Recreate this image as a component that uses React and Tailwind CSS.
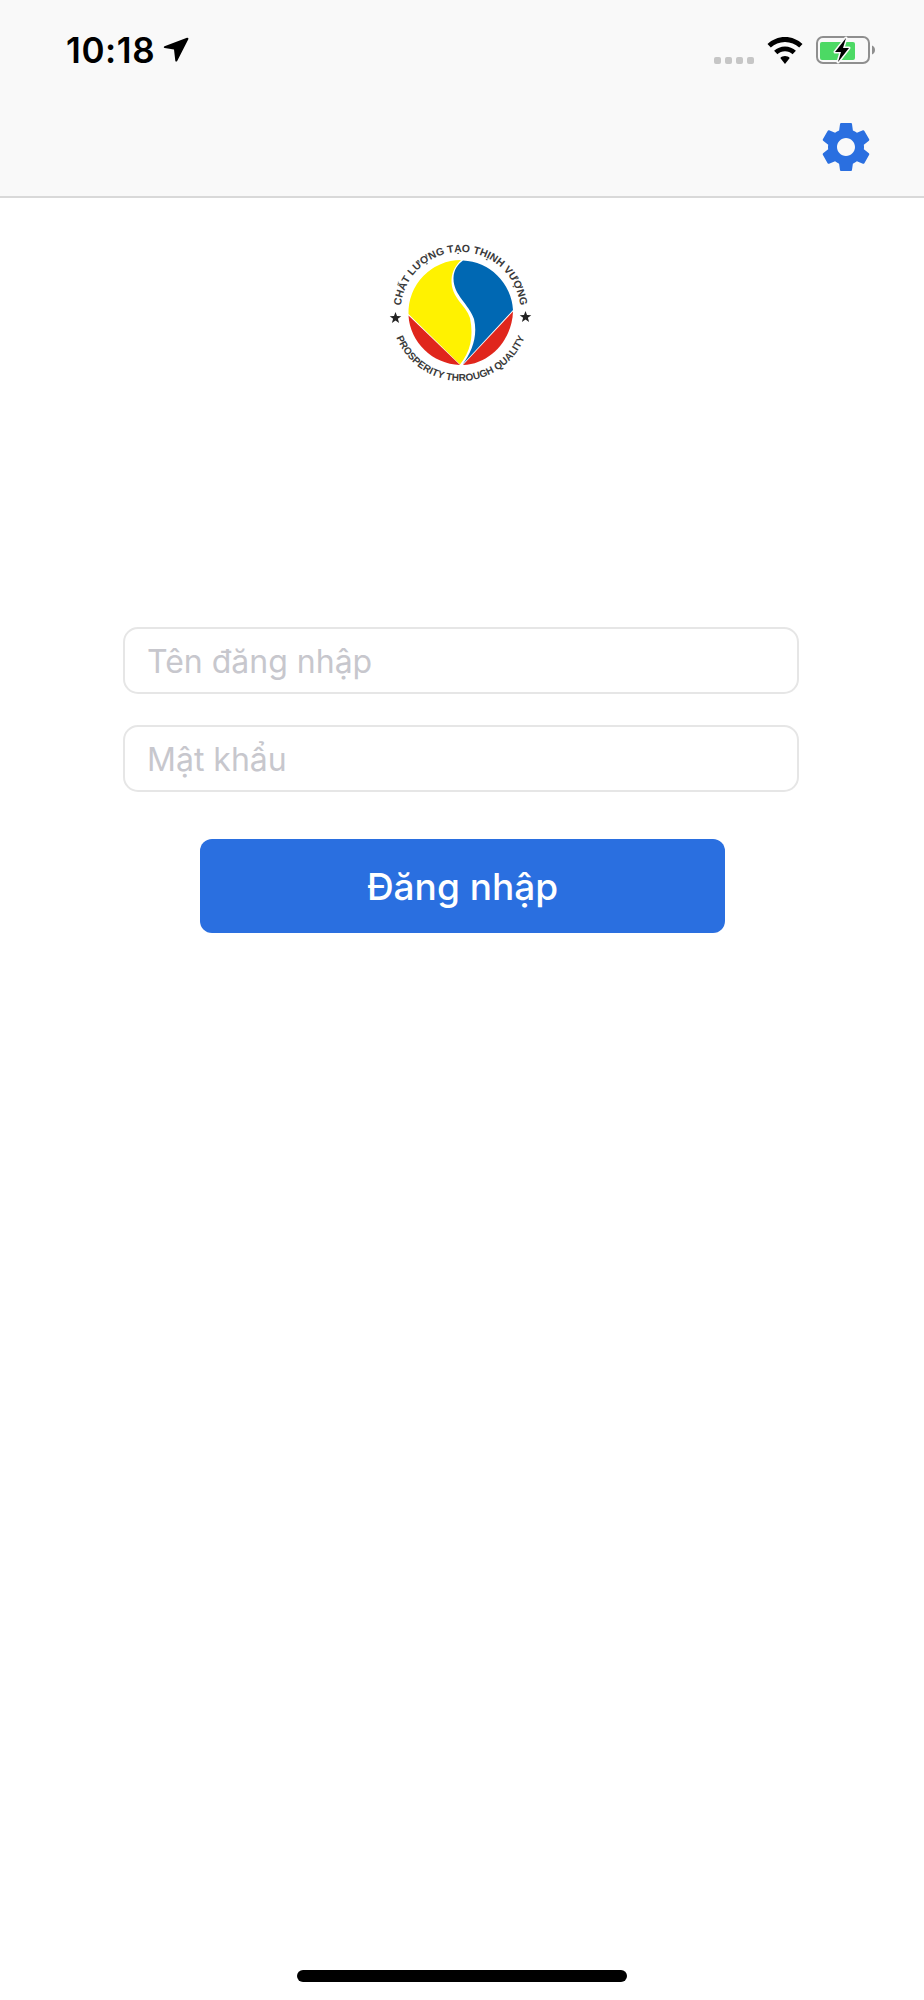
import React from "react";

function LocationArrow() {
  return (
    <svg width="26" height="26" viewBox="0 0 26 26" className="ml-[8px]">
      <path d="M24 .8 1.500 9.200c-1 .4-.9 1.700.1 1.800l9.400 1.500 1.300 11.200c.1 1 1.400 1.200 1.900.3L25.300 2.300c.5-1-.3-1.900-1.300-1.500z" fill="#000" />
    </svg>
  );
}

function Wifi() {
  return (
    <svg width="36" height="27" viewBox="0 0 36 27">
      <path d="M18 0c6.800 0 13 2.700 17.500 7l-3.300 3.500C28.500 7 23.500 4.900 18 4.900S7.500 7 3.800 10.500L.5 7C5 2.700 11.200 0 18 0z" fill="#000" />
      <path d="M18 9.500c4.200 0 8 1.600 10.900 4.300l-3.300 3.500c-2-1.900-4.700-3-7.600-3s-5.600 1.100-7.600 3l-3.300-3.500C10 11.100 13.800 9.500 18 9.500z" fill="#000" />
      <path d="M18 19c1.900 0 3.500.7 4.700 1.900L18 27l-4.700-6.100c1.200-1.200 2.800-1.900 4.700-1.900z" fill="#000" />
    </svg>
  );
}

function Battery() {
  return (
    <svg width="60" height="30" viewBox="0 0 60 30">
      <rect x="1" y="2" width="52" height="26" rx="6" fill="none" stroke="#8f8f8f" strokeWidth="2" />
      <path d="M56 10.500c2 .7 3 2.500 3 4.500s-1 3.800-3 4.500z" fill="#8f8f8f" />
      <rect x="4" y="7" width="35" height="18" rx="2" fill="#4cd964" />
      <path d="M30 3 19 17h6l-3 10 11-14h-6z" fill="#000" stroke="#f9f9f9" strokeWidth="3" strokeLinejoin="round" paintOrder="stroke" />
    </svg>
  );
}

function Logo() {
  return (
    <svg width="180" height="150" viewBox="2 0 180 150" className="block">
      <defs>
        <path id="logo-top" d="M30.500 72a60 60 0 0 1 120 0" />
        <path id="logo-bottom" d="M21.500 72a69 69 0 0 0 138 0" />
      </defs>
      <path d="M91 20A52.500 52.500 0 0 0 38.500 74L90 124.500C100 112 104 98 100 78 96 65 81 58 81.500 40 82 31 86 25 91 20z" fill="#fff200" />
      <path d="M93 20.500A52.500 52.500 0 0 1 143 70L92.500 124.500C102 112 108 96 104 79 99 64 83 55 83.500 38 83.500 30 88 24 93 20.500z" fill="#0068b3" />
      <path d="M38.500 75.500C40 102 62 124 90 125z" fill="#e0261c" />
      <path d="M143 71.500C142 100 120 124 93 125z" fill="#e0261c" />
      <text fontFamily='"Liberation Sans", Arial, sans-serif' fontSize="10.500" fontWeight="700" fill="#3a3a3a" textAnchor="middle">
        <textPath href="#logo-top" startOffset="50%">CHẤT LƯỢNG TẠO THỊNH VƯỢNG</textPath>
      </text>
      <text fontFamily='"Liberation Sans", Arial, sans-serif' fontSize="10" fontWeight="700" fill="#3a3a3a" textAnchor="middle">
        <textPath href="#logo-bottom" startOffset="50%">PROSPERITY THROUGH QUALITY</textPath>
      </text>
      <path d="M25.500 72l1.500 4 4.300.2-3.400 2.600 1.200 4.200-3.600-2.400-3.600 2.400 1.200-4.200-3.400-2.600 4.300-.2z" fill="#222" />
      <path d="M155.500 71l1.500 4 4.300.2-3.400 2.600 1.200 4.200-3.600-2.400-3.600 2.400 1.200-4.200-3.400-2.600 4.300-.2z" fill="#222" />
    </svg>
  );
}

export default function App() {
  return (
    <div className="flex h-[2000px] w-[924px] flex-col overflow-hidden bg-white font-['Inter',sans-serif]">
      {/* Status bar + nav */}
      <header className="h-[198px] shrink-0 border-b-2 border-[#d9d9d9] bg-[#f9f9f9]">
        <div className="flex h-[98px] items-start justify-between pl-[66px] pr-[48px] pt-[29px]">
          <div className="flex items-center">
            <span className="text-[35px] font-semibold leading-[42px] tracking-[0.6px] text-black">10:18</span>
            <LocationArrow />
          </div>
          <div className="flex items-center pt-[6px]">
            <div className="mt-[20px] mr-[13px] flex gap-[4px]">
              <span className="h-[7px] w-[7px] rounded-[2px] bg-[#c6c6c6]" />
              <span className="h-[7px] w-[7px] rounded-[2px] bg-[#c6c6c6]" />
              <span className="h-[7px] w-[7px] rounded-[2px] bg-[#c6c6c6]" />
              <span className="h-[7px] w-[7px] rounded-[2px] bg-[#c6c6c6]" />
            </div>
            <Wifi />
            <div className="ml-[13px]">
              <Battery />
            </div>
          </div>
        </div>
        <div className="flex justify-end pr-[48px] pt-[20px]">
          <svg width="60" height="60" viewBox="0 0 24 24" fill="#2a6fe0" className="-mt-[1px]">
            <path d="M19.140 12.940c.04-.3.06-.61.06-.94 0-.32-.02-.64-.07-.94l2.030-1.580c.18-.14.23-.41.12-.61l-1.920-3.320c-.12-.22-.37-.29-.59-.22l-2.390.96c-.5-.38-1.030-.7-1.620-.94l-.36-2.540c-.04-.24-.24-.41-.48-.41h-3.840c-.24 0-.43.17-.47.41l-.36 2.540c-.59.24-1.130.57-1.620.94l-2.390-.96c-.22-.08-.47 0-.59.22L2.740 8.870c-.12.21-.08.47.12.61l2.030 1.580c-.05.3-.09.63-.09.94s.02.64.07.94l-2.030 1.580c-.18.14-.23.41-.12.61l1.920 3.320c.12.22.37.29.59.22l2.390-.96c.5.38 1.030.7 1.620.94l.36 2.540c.05.24.24.41.48.41h3.840c.24 0 .44-.17.47-.41l.36-2.540c.59-.24 1.130-.56 1.620-.94l2.390.96c.22.08.47 0 .59-.22l1.920-3.320c.12-.22.07-.47-.12-.61l-2.010-1.580zM12 15.600c-1.980 0-3.600-1.620-3.600-3.600s1.620-3.600 3.600-3.600 3.600 1.620 3.600 3.600-1.620 3.600-3.600 3.600z" />
          </svg>
        </div>
      </header>

      {/* Logo */}
      <div className="mt-[42px] flex justify-center">
        <Logo />
      </div>

      {/* Form */}
      <div className="ml-[123px] mt-[237px] flex w-[676px] flex-col gap-[31px]">
        <input
          placeholder="Tên đăng nhập"
          className="h-[67px] rounded-[15px] border-2 border-[#e6e6e6] px-[22px] pt-[2px] text-[32px] text-black outline-none placeholder:text-[#c7c7cd]"
        />
        <input
          placeholder="Mật khẩu"
          className="h-[67px] rounded-[15px] border-2 border-[#e6e6e6] px-[22px] pt-[2px] text-[32px] text-black outline-none placeholder:text-[#c7c7cd]"
        />
      </div>
      <button className="ml-[200px] mt-[47px] h-[94px] w-[525px] rounded-[12px] bg-[#2a6fe0] pt-[2px] text-[37px] font-medium text-white">
        Đăng nhập
      </button>

      {/* Home indicator */}
      <div className="mt-auto mb-[18px] ml-[297px] h-[12px] w-[330px] rounded-full bg-black" />
    </div>
  );
}
